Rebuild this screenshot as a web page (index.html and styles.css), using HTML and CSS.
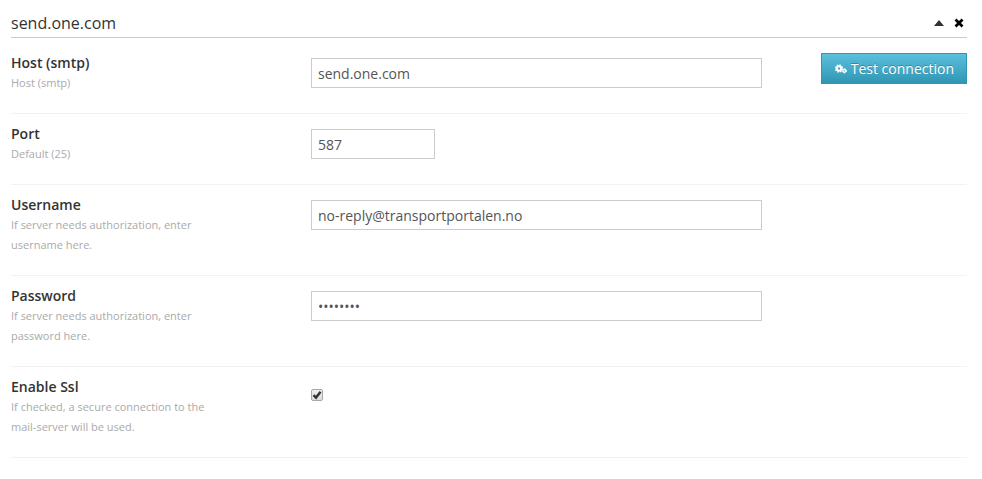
FILE: index.html
```html
<!DOCTYPE html>
<html lang="en">
<head>
    <meta charset="UTF-8">
    <meta name="viewport" content="width=device-width, initial-scale=1.0">
    <title>Mail server settings</title>
    <link rel="stylesheet" href="styles.css">
</head>
<body>
    <form class="panel">
        <div class="panel-header">
            <h1>send.one.com</h1>
            <div class="panel-tools">
                <button type="button" class="tool" aria-label="Collapse">
                    <svg width="10" height="10" viewBox="0 0 10 10"><path d="M5 2 L10 8 H0 Z" fill="#333"/></svg>
                </button>
                <button type="button" class="tool" aria-label="Remove">
                    <svg width="10" height="10" viewBox="0 0 10 10"><path d="M1.5 1.5 L8.5 8.5 M8.5 1.5 L1.5 8.5" stroke="#000" stroke-width="2.8"/></svg>
                </button>
            </div>
        </div>

        <div class="row">
            <div class="info">
                <label for="host">Host (smtp)</label>
                <p>Host (smtp)</p>
            </div>
            <div class="field"><input type="text" id="host" value="send.one.com"></div>
            <button type="button" class="btn">
                <svg width="12" height="10" viewBox="0 0 12 10">
                    <g fill="none" stroke="#fff">
                        <circle cx="4" cy="4.5" r="2.2" stroke-width="2"/>
                        <circle cx="4" cy="4.5" r="3.4" stroke-width="1.6" stroke-dasharray="1.5 1.17"/>
                        <circle cx="9.4" cy="6.8" r="1.4" stroke-width="1.5"/>
                        <circle cx="9.4" cy="6.8" r="2.2" stroke-width="1" stroke-dasharray="1.2 1.1"/>
                    </g>
                </svg>
                Test connection
            </button>
        </div>

        <div class="row">
            <div class="info">
                <label for="port">Port</label>
                <p>Default (25)</p>
            </div>
            <div class="field"><input type="text" id="port" class="small" value="587"></div>
        </div>

        <div class="row">
            <div class="info">
                <label for="username">Username</label>
                <p>If server needs authorization, enter username here.</p>
            </div>
            <div class="field"><input type="text" id="username" value="no-reply@transportportalen.no"></div>
        </div>

        <div class="row">
            <div class="info">
                <label for="password">Password</label>
                <p>If server needs authorization, enter password here.</p>
            </div>
            <div class="field"><input type="password" id="password" value="password"></div>
        </div>

        <div class="row">
            <div class="info">
                <label for="ssl">Enable Ssl</label>
                <p>If checked, a secure connection to the mail-server will be used.</p>
            </div>
            <div class="field check"><input type="checkbox" id="ssl" checked></div>
        </div>
    </form>
</body>
</html>
```
FILE: styles.css
```css
* {
    box-sizing: border-box;
}
body {
    margin: 0;
    padding: 8px 15px 20px 11px;
    font-family: 'Open Sans', sans-serif;
    font-size: 14px;
    line-height: 20px;
    color: #333;
    background: #fff;
}
.panel-header {
    display: flex;
    justify-content: space-between;
    align-items: center;
    height: 30px;
    margin-bottom: 5px;
    border-bottom: 1px solid #ccc;
}
h1 {
    margin: 0;
    font-size: 16px;
    font-weight: 400;
}
.panel-tools {
    display: flex;
    gap: 10px;
    padding-right: 3px;
}
.tool {
    display: flex;
    padding: 0;
    border: none;
    background: none;
    cursor: pointer;
}
.row {
    display: grid;
    grid-template-columns: 300px 1fr 205px;
    align-items: start;
    padding: 10px 0 20px;
    border-bottom: 1px solid #f2f2f2;
}
.info {
    width: 200px;
}
.info label {
    display: block;
    font-weight: 600;
}
.info p {
    margin: 0;
    font-size: 11px;
    color: #aaa;
}
.field {
    padding-top: 5px;
}
input[type="text"], input[type="password"] {
    display: block;
    width: 100%;
    height: 30px;
    padding: 0 6px;
    border: 1px solid #ccc;
    font-family: inherit;
    font-size: 14px;
    color: #555;
}
input.small {
    width: 124px;
}
.check {
    padding-top: 12px;
}
input[type="checkbox"] {
    appearance: none;
    display: block;
    width: 12px;
    height: 12px;
    margin: 0;
    border: 1px solid #a8a8a8;
    border-radius: 2px;
    background: linear-gradient(#eee, #ddd);
}
input[type="checkbox"]:checked {
    background: url("data:image/svg+xml,%3Csvg xmlns='http://www.w3.org/2000/svg' viewBox='0 0 10 10'%3E%3Cpath d='M1.5 5.2 L4 7.6 L8.6 1.8' fill='none' stroke='%23333' stroke-width='2.4'/%3E%3C/svg%3E"), linear-gradient(#eee, #ddd);
}
.btn {
    display: flex;
    align-items: center;
    justify-self: end;
    gap: 4px;
    height: 31px;
    padding: 0 12px 0 13px;
    border: 1px solid #2f96b4;
    background: linear-gradient(#5bc0de, #2f96b4);
    color: #fff;
    font-family: inherit;
    font-size: 14px;
    text-shadow: 0 -1px 0 rgba(0, 0, 0, 0.25);
    cursor: pointer;
}
```
